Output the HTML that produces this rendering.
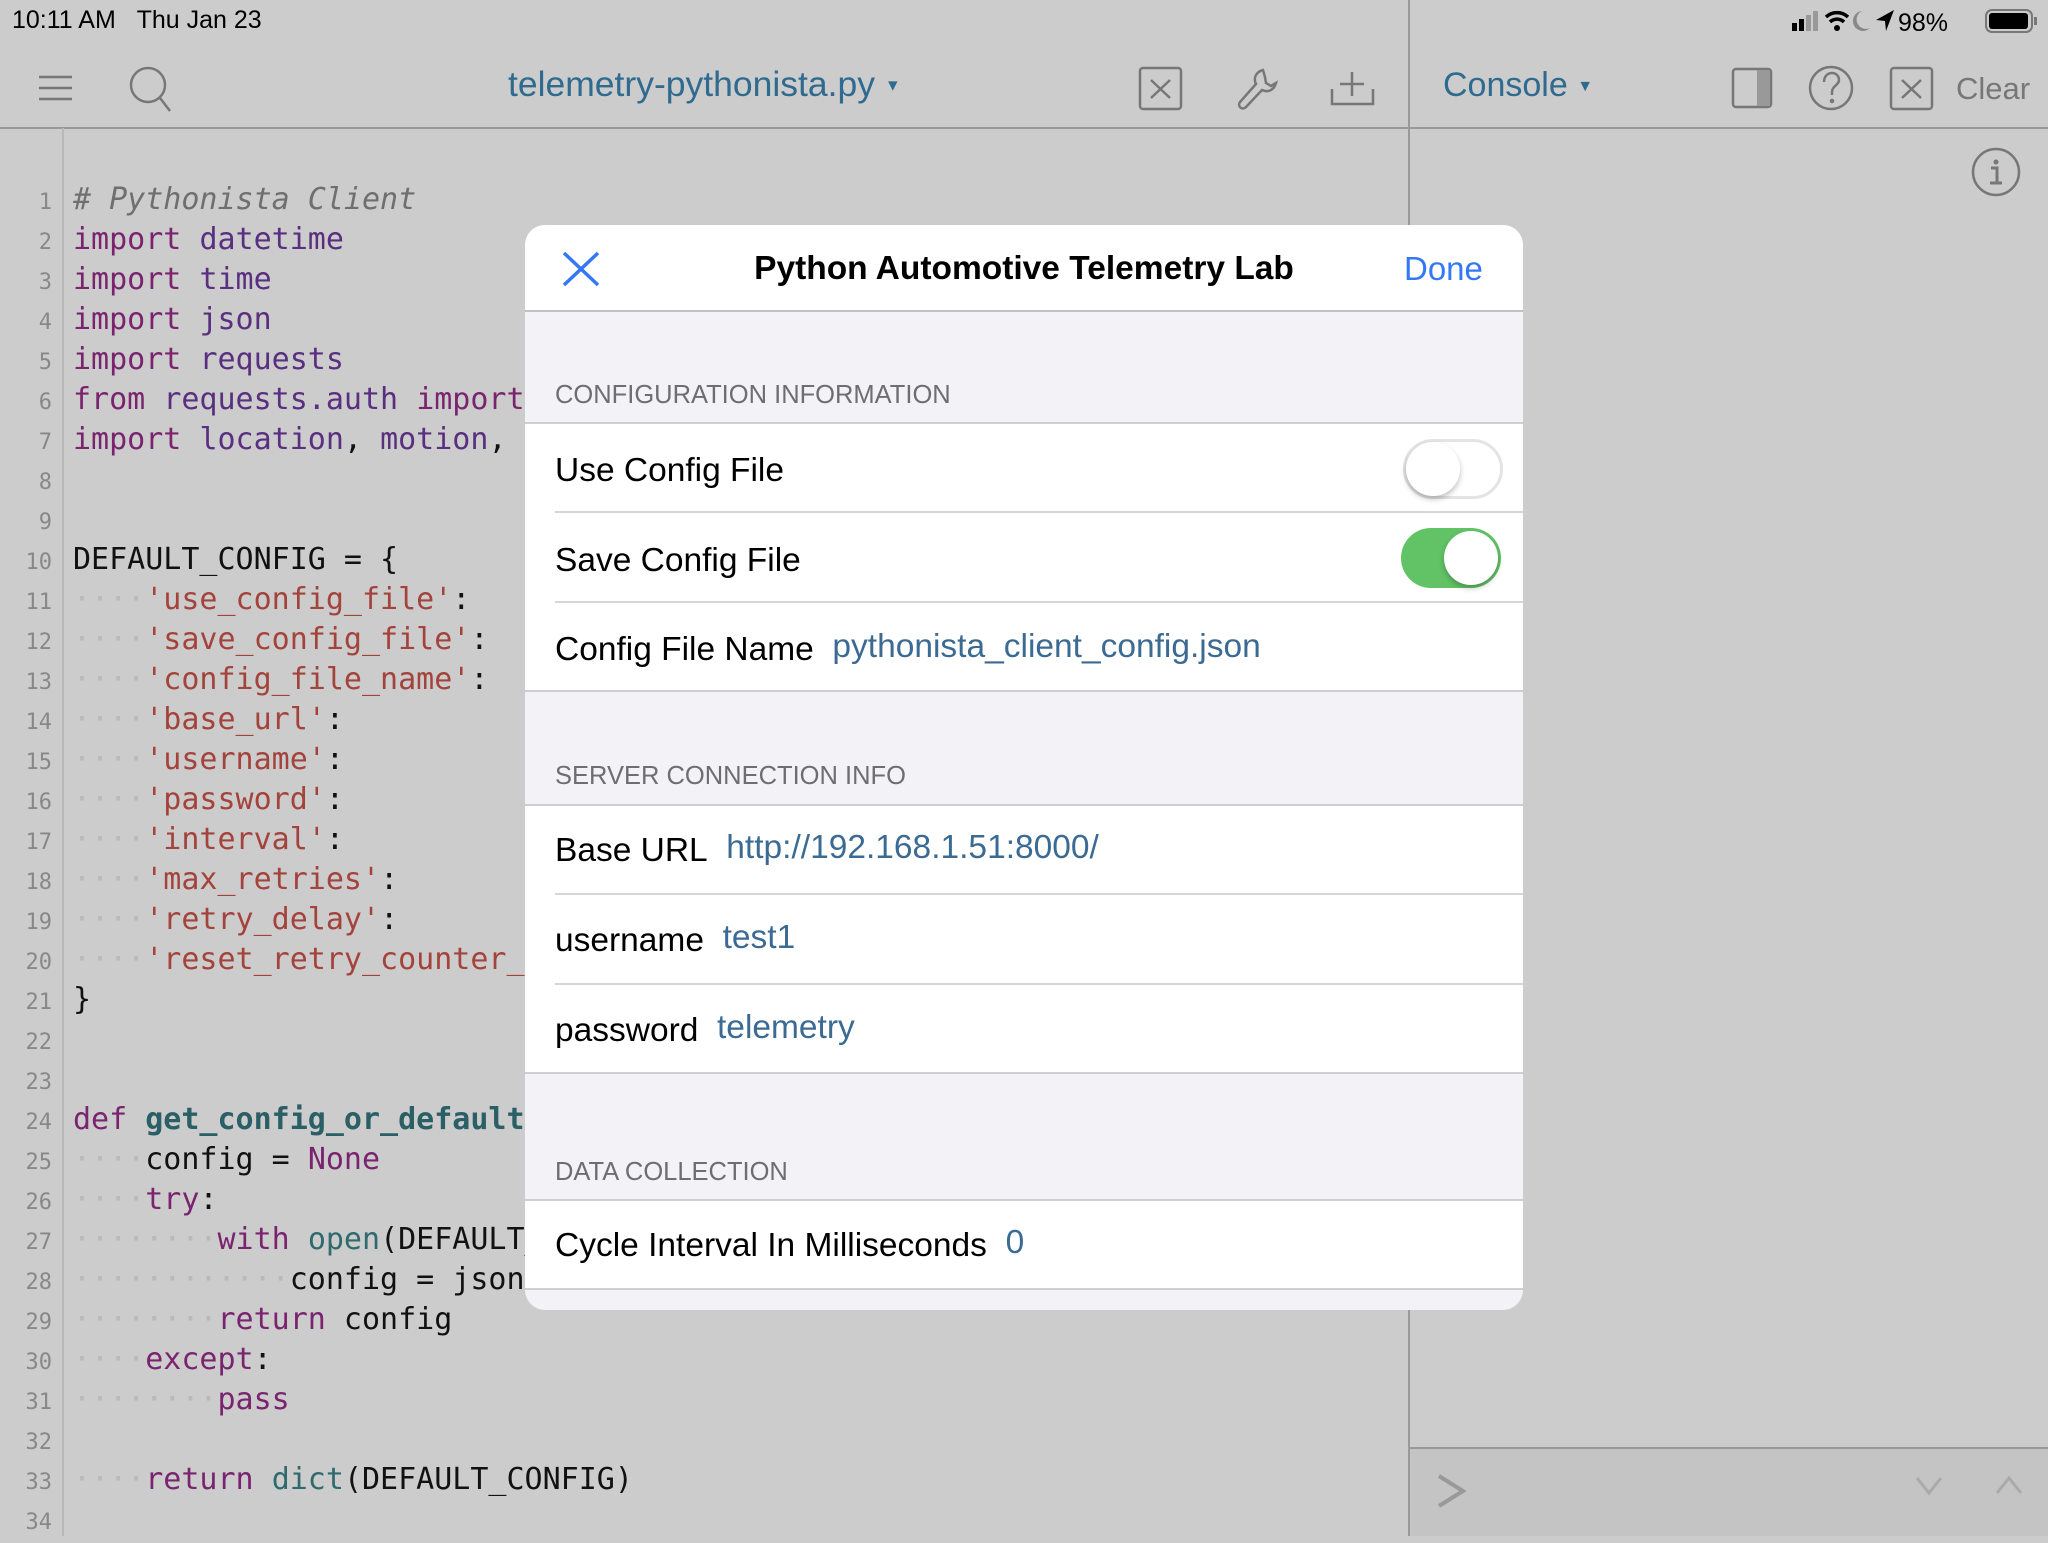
<!DOCTYPE html>
<html><head><meta charset="utf-8"><style>
*{margin:0;padding:0;box-sizing:border-box}
body{width:2048px;height:1536px;background:#cccccc;position:relative;overflow:hidden;font-family:"Liberation Sans",sans-serif}
.a{position:absolute}
.code{position:absolute;left:73px;top:180px;font-family:"DejaVu Sans Mono","Liberation Mono",monospace;font-size:30px;line-height:40px;white-space:pre;color:#111}
.ln{position:absolute;left:0;width:52px;top:183px;text-align:right;font-family:"DejaVu Sans Mono",monospace;font-size:22px;line-height:40px;color:#888;white-space:pre}
.k{color:#7a2470}.m{color:#5a2f80}.s{color:#a3433b}.c{color:#6f6f6f;font-style:italic}.f{color:#2b5f66;font-weight:bold}.b{color:#2f6a6e}.d{color:#b9b9b9}
.modal{position:absolute;left:525px;top:225px;width:998px;height:1085px;background:#f2f2f7;border-radius:20px;overflow:hidden;z-index:5}
.hdr{position:absolute;left:0;top:0;width:100%;height:87px;background:#fff;border-bottom:2px solid #c0c0c4}
.sec{position:absolute;left:30px;font-size:25.5px;color:#6d6d72}
.row{position:absolute;left:0;width:100%;background:#fff;border-top:2px solid #cfcfd3}
.row .l{position:absolute;left:30px;font-size:33.5px;color:#000}
.row .v{color:#3b6a93}
.tg{position:absolute;width:100px;height:60px;border-radius:30px}
.knob{position:absolute;top:3px;width:54px;height:54px;border-radius:27px;background:#fff;box-shadow:0 3px 6px rgba(0,0,0,.25)}
</style></head><body>
<div class="a" style="left:12px;top:6px;font-size:25px;color:#000">10:11 AM&nbsp;&nbsp;&nbsp;Thu Jan 23</div>
<svg class="a" style="left:1790px;top:6px" width="250" height="30" viewBox="0 0 250 30">
<rect x="2" y="17" width="5" height="8" fill="#000"/><rect x="9" y="13" width="5" height="12" fill="#000"/><rect x="16" y="9" width="5" height="16" fill="#999"/><rect x="23" y="5" width="5" height="20" fill="#999"/>
<path d="M36 11 a16 16 0 0 1 22 0" stroke="#000" stroke-width="3.5" fill="none"/><path d="M40 16 a10 10 0 0 1 14 0" stroke="#000" stroke-width="3.5" fill="none"/><circle cx="47" cy="22" r="3" fill="#000"/>
<path d="M72 5 a10 10 0 1 0 8 17 a8 8 0 0 1 -8 -17z" fill="#888"/>
<path d="M104 4 L86 14 L95 15 L96 25z" fill="#000"/>
<text x="108" y="25" font-family="Liberation Sans" font-size="25" fill="#000">98%</text>
<rect x="196" y="4" width="46" height="22" rx="6" fill="none" stroke="#777" stroke-width="2"/><rect x="199" y="7" width="39" height="16" rx="3" fill="#000"/><rect x="244" y="11" width="3" height="8" fill="#777"/>
</svg>
<div class="a" style="left:0;top:127px;width:2048px;height:2px;background:#999"></div>
<div class="a" style="left:1408px;top:0;width:2px;height:1536px;background:#999"></div>
<div class="a" style="left:62px;top:128px;width:2px;height:1408px;background:#b8b8b8"></div>
<svg class="a" style="left:0;top:60px" width="1408" height="60" viewBox="0 60 1408 60">
<g stroke="#777" stroke-width="2.5" fill="none">
<path d="M39 77h33M39 88h33M39 99h33"/>
<circle cx="148" cy="85" r="17"/><path d="M160 98l10 13"/>
<rect x="1140" y="68" width="41" height="41" rx="3"/><path d="M1151 80l19 18M1170 80l-19 18"/>
<path d="M1263 70c-7 2-10 8-7 14l-16 18c-3 4 2 9 6 5l16-17c6 3 12 0 14-7l-5 3-5-3-1-6z"/>
<path d="M1332 89v15h41v-15M1352 72v24M1340 84h24"/>
</g>
</svg>
<div class="a" style="left:508px;top:64px;font-size:35.5px;color:#2f6a8f">telemetry-pythonista.py <span style="font-size:16px;vertical-align:middle">▼</span></div>
<div class="a" style="left:1443px;top:66px;font-size:34px;color:#2f6a8f">Console <span style="font-size:16px;vertical-align:middle">▼</span></div>
<svg class="a" style="left:1720px;top:60px" width="240" height="60" viewBox="1720 60 240 60">
<g stroke="#777" stroke-width="2.5" fill="none">
<rect x="1733" y="69" width="38" height="38" rx="3"/><rect x="1757" y="70" width="13" height="36" fill="#999" stroke="none"/>
<circle cx="1831" cy="88" r="21"/><path d="M1824 82c0-6 4-9 8-9s7 3 7 7c0 5-7 6-7 12v3"/><circle cx="1832" cy="101" r="1" fill="#777"/>
<rect x="1891" y="68" width="41" height="41" rx="3"/><path d="M1902 80l19 18M1921 80l-19 18"/>
</g></svg>
<div class="a" style="left:1956px;top:71px;font-size:31px;color:#777">Clear</div>
<svg class="a" style="left:1970px;top:146px" width="52" height="52"><circle cx="26" cy="26" r="23" stroke="#777" stroke-width="2.5" fill="none"/><circle cx="26" cy="16" r="2.5" fill="#777"/><path d="M21 22h6v15M20 37h12" stroke="#777" stroke-width="3" fill="none"/></svg>
<div class="a" style="left:1410px;top:1447px;width:638px;height:89px;background:#c4c4c4;border-top:2px solid #999"></div>
<svg class="a" style="left:1410px;top:1449px" width="638" height="87"><path d="M29 27l24 15-24 15" stroke="#999" stroke-width="4" fill="none"/><path d="M507 29l12 15 12-15" stroke="#aaa" stroke-width="3" fill="none"/><path d="M587 44l12-15 12 15" stroke="#aaa" stroke-width="3" fill="none"/></svg>
<div class="ln">1
2
3
4
5
6
7
8
9
10
11
12
13
14
15
16
17
18
19
20
21
22
23
24
25
26
27
28
29
30
31
32
33
34</div>
<div class="code"><span class="c"># Pythonista Client</span>
<span class="k">import</span> <span class="m">datetime</span>
<span class="k">import</span> <span class="m">time</span>
<span class="k">import</span> <span class="m">json</span>
<span class="k">import</span> <span class="m">requests</span>
<span class="k">from</span> <span class="m">requests.auth</span> <span class="k">import</span> HTTPBasicAuth
<span class="k">import</span> <span class="m">location</span>, <span class="m">motion</span>, <span class="m">console</span>


DEFAULT_CONFIG = {
<span class="d">····</span><span class="s">'use_config_file'</span>:       <span class="k">False</span>,
<span class="d">····</span><span class="s">'save_config_file'</span>:      <span class="k">True</span>,
<span class="d">····</span><span class="s">'config_file_name'</span>:      <span class="s">'x'</span>,
<span class="d">····</span><span class="s">'base_url'</span>:              <span class="s">'x'</span>,
<span class="d">····</span><span class="s">'username'</span>:              <span class="s">'x'</span>,
<span class="d">····</span><span class="s">'password'</span>:              <span class="s">'x'</span>,
<span class="d">····</span><span class="s">'interval'</span>:              0,
<span class="d">····</span><span class="s">'max_retries'</span>:           0,
<span class="d">····</span><span class="s">'retry_delay'</span>:           0,
<span class="d">····</span><span class="s">'reset_retry_counter_x'</span>: 0,
}


<span class="k">def</span> <span class="f">get_config_or_default</span>():
<span class="d">····</span>config = <span class="k">None</span>
<span class="d">····</span><span class="k">try</span>:
<span class="d">········</span><span class="k">with</span> <span class="b">open</span>(DEFAULT_CONFIG)
<span class="d">············</span>config = json.load()
<span class="d">········</span><span class="k">return</span> config
<span class="d">····</span><span class="k">except</span>:
<span class="d">········</span><span class="k">pass</span>

<span class="d">····</span><span class="k">return</span> <span class="b">dict</span>(DEFAULT_CONFIG)
</div>
<div class="modal">
 <div class="hdr">
  <svg class="a" style="left:37px;top:26px" width="38" height="36"><path d="M2 2l34 32M36 2L2 34" stroke="#3478f6" stroke-width="3.5"/></svg>
  <div class="a" style="left:0;width:100%;top:25px;text-align:center;font-size:33.5px;font-weight:bold;color:#000">Python Automotive Telemetry Lab</div>
  <div class="a" style="left:879px;top:25px;font-size:33px;color:#3478f6">Done</div>
 </div>
 <div class="sec" style="top:156px">CONFIGURATION INFORMATION</div>
 <div class="row" style="top:197px;height:270px;border-bottom:2px solid #cfcfd3">
  <div class="l" style="top:28px">Use Config File</div>
  <div class="tg" style="left:878px;top:15px;background:#fff;border:3px solid #e4e4e6"><div class="knob" style="left:0;top:0"></div></div>
  <div class="a" style="left:30px;right:0;top:87px;height:2px;background:#d6d6da"></div>
  <div class="l" style="top:118px">Save Config File</div>
  <div class="tg" style="left:876px;top:104px;background:#61c366"><div class="knob" style="left:43px"></div></div>
  <div class="a" style="left:30px;right:0;top:177px;height:2px;background:#d6d6da"></div>
  <div class="l" style="top:207px">Config File Name&nbsp;&nbsp;<span class="v" style="position:relative;top:-3px">pythonista_client_config.json</span></div>
 </div>
 <div class="sec" style="top:537px">SERVER CONNECTION INFO</div>
 <div class="row" style="top:579px;height:270px;border-bottom:2px solid #cfcfd3">
  <div class="l" style="top:26px">Base URL&nbsp;&nbsp;<span class="v" style="position:relative;top:-3px">http://192.168.1.51:8000/</span></div>
  <div class="a" style="left:30px;right:0;top:87px;height:2px;background:#d6d6da"></div>
  <div class="l" style="top:116px">username&nbsp;&nbsp;<span class="v" style="position:relative;top:-3px">test1</span></div>
  <div class="a" style="left:30px;right:0;top:177px;height:2px;background:#d6d6da"></div>
  <div class="l" style="top:206px">password&nbsp;&nbsp;<span class="v" style="position:relative;top:-3px">telemetry</span></div>
 </div>
 <div class="sec" style="top:933px">DATA COLLECTION</div>
 <div class="row" style="top:974px;height:91px;border-bottom:2px solid #cfcfd3">
  <div class="l" style="top:26px">Cycle Interval In Milliseconds&nbsp;&nbsp;<span class="v" style="position:relative;top:-3px">0</span></div>
 </div>
</div>
</body></html>
